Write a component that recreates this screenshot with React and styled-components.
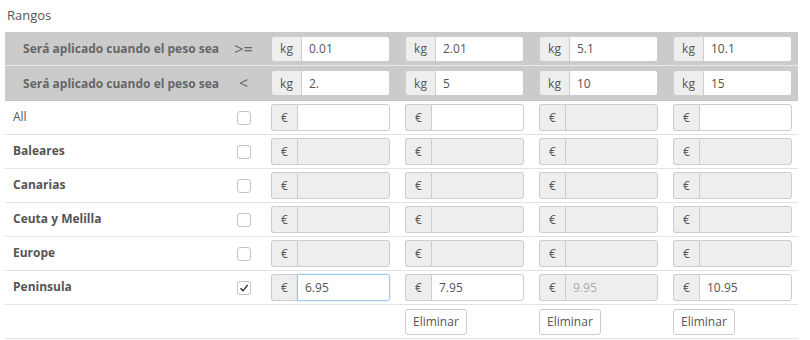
import styled, { createGlobalStyle } from 'styled-components'

const Global = createGlobalStyle`
  body {
    margin: 0;
    background: #fff;
    font-family: "Open Sans", "Liberation Sans", sans-serif;
    color: #555;
  }
`

const Page = styled.div`
  width: 810px;
  height: 340px;
  padding: 0 0 0 5px;
  box-sizing: border-box;
  overflow: hidden;
`

const Title = styled.div`
  height: 32px;
  line-height: 30px;
  padding-left: 2px;
  font-size: 13px;
  color: #555;
`

const Table = styled.div`
  width: 793px;
`

const Row = styled.div`
  display: grid;
  grid-template-columns: 220px 41px 134px 134px 134px 130px;
  align-items: center;
  height: ${p => (p.$tall ? 35 : 34)}px;
  box-sizing: border-box;
  background: ${p => (p.$head ? '#cbcbcb' : '#fff')};
  border-bottom: 1px solid ${p => (p.$head ? (p.$first ? '#e8e8e8' : '#c4c4c4') : '#e2e2e2')};
`

const HeadLabel = styled.div`
  text-align: right;
  padding-right: 6px;
  font-size: 12px;
  font-weight: 700;
  color: #666;
`

const Operator = styled.div`
  text-align: center;
  font-size: 16px;
  color: #666;
  padding-right: 4px;
`

const ZoneLabel = styled.div`
  padding-left: 8px;
  font-size: 12px;
  font-weight: ${p => (p.$bold ? 700 : 400)};
  color: #555;
  margin-top: -3px;
`

const Cell = styled.div`
  padding-left: 5px;
  display: flex;
  align-items: center;
`

const CheckCell = styled.div`
  display: flex;
  justify-content: center;
  padding-right: 4px;
`

const Check = styled.span`
  width: 14px;
  height: 14px;
  box-sizing: border-box;
  border: 1px solid #c4c4c4;
  border-radius: 3px;
  background: #fff;
  display: flex;
  align-items: center;
  justify-content: center;
`

const Group = styled.div`
  display: flex;
  width: 119px;
  height: ${p => (p.$head ? 26 : 27)}px;
`

const Addon = styled.span`
  width: ${p => p.$w}px;
  flex: none;
  box-sizing: border-box;
  border: 1px solid #ccc;
  border-right: none;
  border-radius: 3px 0 0 3px;
  background: #eee;
  display: flex;
  align-items: center;
  justify-content: center;
  font-size: 12px;
  color: #555;
`

const Field = styled.input`
  flex: 1;
  min-width: 0;
  box-sizing: border-box;
  margin: 0;
  padding: 0 7px;
  border: 1px solid ${p => (p.$focus ? '#9cc6ea' : '#ccc')};
  border-radius: 0 3px 3px 0;
  background: ${p => (p.disabled ? '#eee' : '#fff')};
  font-family: "Open Sans", "Liberation Sans", sans-serif;
  font-size: 12px;
  color: ${p => (p.disabled ? '#aaa' : '#555')};
  outline: none;
  box-shadow: ${p => (p.$focus ? '0 0 2px rgba(102,175,233,0.4)' : 'none')};
`

const Button = styled.button`
  height: 26px;
  padding: 0 7px;
  border: 1px solid #ccc;
  border-radius: 3px;
  background: #fff;
  font-family: "Open Sans", "Liberation Sans", sans-serif;
  font-size: 12px;
  color: #555;
`

const from = ['0.01', '2.01', '5.1', '10.1']
const to = ['2.', '5', '10', '15']

const allOff = [{ off: true }, { off: true }, { off: true }, { off: true }]

const zones = [
  { name: 'All', bold: false, checked: false, cells: [{}, {}, { off: true }, {}] },
  { name: 'Baleares', bold: true, checked: false, cells: allOff },
  { name: 'Canarias', bold: true, checked: false, cells: allOff },
  { name: 'Ceuta y Melilla', bold: true, checked: false, cells: allOff },
  { name: 'Europe', bold: true, checked: false, cells: allOff },
  {
    name: 'Peninsula', bold: true, checked: true,
    cells: [{ v: '6.95', focus: true }, { v: '7.95' }, { v: '9.95', off: true }, { v: '10.95' }],
  },
]

const InputGroup = ({ unit, value, disabled, focus, head }) => (
  <Group $head={head}>
    <Addon $w={unit === 'kg' ? 30 : 26}>{unit}</Addon>
    <Field defaultValue={value || ''} disabled={disabled} $focus={focus} readOnly />
  </Group>
)

const HeadRow = ({ op, values, first }) => (
  <Row $head $first={first} $tall={!first}>
    <HeadLabel>Será aplicado cuando el peso sea</HeadLabel>
    <Operator>{op}</Operator>
    {values.map((v, i) => (
      <Cell key={i}>
        <InputGroup unit="kg" value={v} head />
      </Cell>
    ))}
  </Row>
)

const App = () => (
  <Page>
    <Global />
    <Title>Rangos</Title>
    <Table>
      <HeadRow op=">=" values={from} first />
      <HeadRow op="<" values={to} />
      {zones.map(z => (
        <Row key={z.name}>
          <ZoneLabel $bold={z.bold}>{z.name}</ZoneLabel>
          <CheckCell>
            <Check>
              {z.checked && (
                <svg width="10" height="10" viewBox="0 0 10 10">
                  <path d="M1.5 5.2 L4 7.8 L8.6 1.8" fill="none" stroke="#222" strokeWidth="1.3" />
                </svg>
              )}
            </Check>
          </CheckCell>
          {z.cells.map((c, i) => (
            <Cell key={i}>
              <InputGroup unit="€" value={c.v} disabled={c.off} focus={c.focus} />
            </Cell>
          ))}
        </Row>
      ))}
      <Row>
        <div />
        <div />
        <div />
        {[0, 1, 2].map(i => (
          <Cell key={i}>
            <Button>Eliminar</Button>
          </Cell>
        ))}
      </Row>
    </Table>
  </Page>
)

export default App
